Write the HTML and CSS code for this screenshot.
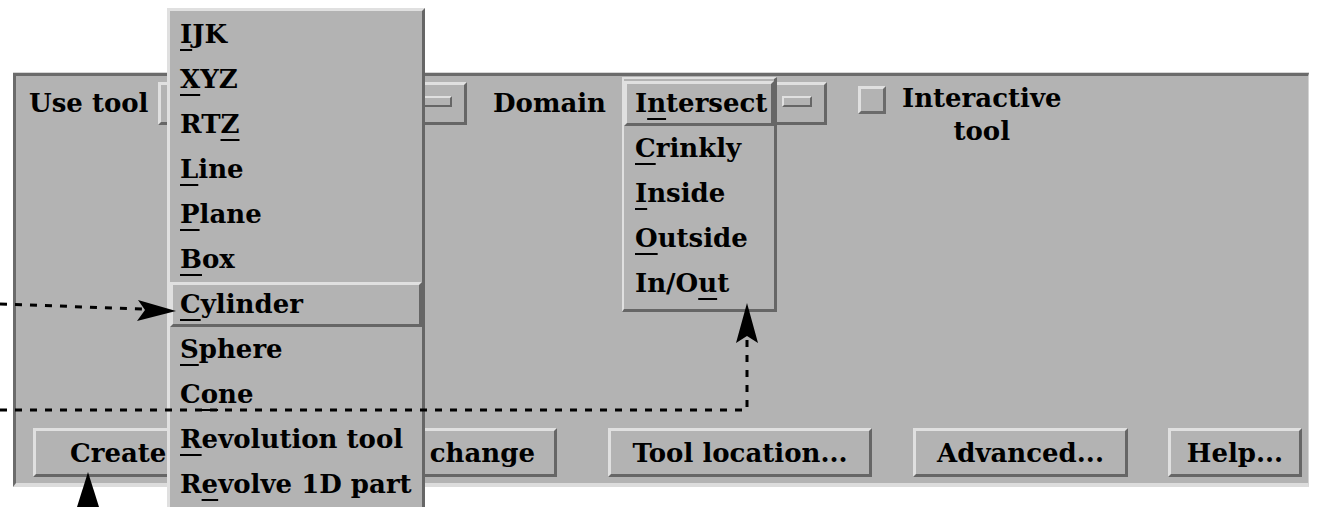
FILE: index.html
```html
<!DOCTYPE html>
<html lang="en">
<head>
  <meta charset="UTF-8" />
  <meta name="viewport" content="width=device-width, initial-scale=1.0"/>
  <title>Clip tool</title>
  <link rel="stylesheet" href="styles.css">
</head>
<body>
  <div class="stage">
    <div class="panel">
      <div class="top-row">
        <span class="label use-label">Use tool</span>
        <div class="option use-option">
          <span class="indicator"></span>
        </div>
        <span class="label domain-label">Domain</span>
        <div class="option domain-option">
          <span class="indicator"></span>
        </div>
        <div class="toggle">
          <span class="toggle-box"></span>
          <span class="toggle-text">Interactive<br>tool</span>
        </div>
      </div>

      <div class="button-row">
        <button class="btn btn-create">Create</button>
        <button class="btn btn-apply">change</button>
        <button class="btn btn-location">Tool location...</button>
        <button class="btn btn-advanced">Advanced...</button>
        <button class="btn btn-help">Help...</button>
      </div>
    </div>

    <!-- popup menu of the Use tool option -->
    <ul class="menu tool-menu">
      <li><u>I</u>JK</li>
      <li><u>X</u>YZ</li>
      <li>RT<u>Z</u></li>
      <li><u>L</u>ine</li>
      <li><u>P</u>lane</li>
      <li><u>B</u>ox</li>
      <li class="active"><u>C</u>ylinder</li>
      <li><u>S</u>phere</li>
      <li>C<u>o</u>ne</li>
      <li><u>R</u>evolution tool</li>
      <li>R<u>e</u>volve 1D part</li>
    </ul>

    <!-- popup menu of the Domain option -->
    <ul class="menu domain-menu">
      <li class="active">I<u>n</u>tersect</li>
      <li><u>C</u>rinkly</li>
      <li><u>I</u>nside</li>
      <li><u>O</u>utside</li>
      <li>In/O<u>u</u>t</li>
    </ul>

    <!-- callout arrows -->
    <svg class="callouts" width="1317" height="507" viewBox="0 0 1317 507">
      <g stroke="#000" stroke-width="3" stroke-dasharray="7 8" fill="none">
        <path d="M0 304 L142 309"/>
        <path d="M0 410 L747 410 L747 340"/>
        <path d="M88 500 L88 507"/>
      </g>
      <g fill="#000">
        <path d="M176 311 L138 300 L145 310 L137 321 Z"/>
        <path d="M747 303 L736 343 L747 336 L758 343 Z"/>
        <path d="M88 472 L77 507 L99 507 Z"/>
      </g>
    </svg>
  </div>
</body>
</html>
```

FILE: styles.css
```css
body {
  margin: 0;
  background: #fff;
  font-family: 'DejaVu Serif', 'Liberation Serif', serif;
  font-weight: bold;
  font-size: 26px;
  color: #000;
}

.stage {
  position: relative;
  width: 1317px;
  height: 507px;
  overflow: hidden;
  padding: 73px 0 0 13px;
  box-sizing: border-box;
}

.panel {
  width: 1296px;
  height: 414px;
  box-sizing: border-box;
  background: #b3b3b3;
  border-style: solid;
  border-width: 3px 1px 4px 3px;
  border-color: #6b6b6b #d4d4d4 #dcdcdc #6b6b6b;
  box-shadow: 0 -1px 0 #d6d6d6;
  display: flex;
  flex-direction: column;
  justify-content: space-between;
}

.top-row {
  display: flex;
  align-items: flex-start;
  padding: 6px 0 0 13px;
}

.label {
  line-height: 43px;
  white-space: nowrap;
}

.use-label,
.domain-label {
  width: 129px;
}

.domain-label {
  margin-left: 26px;
}

.option {
  height: 43px;
  box-sizing: border-box;
  border: 3px solid;
  border-color: #e0e0e0 #666 #666 #e0e0e0;
  display: flex;
  align-items: center;
  justify-content: flex-end;
  padding: 0 12px 0 10px;
}

.use-option {
  width: 309px;
}

.domain-option {
  width: 205px;
}

.indicator {
  width: 30px;
  height: 11px;
  box-sizing: border-box;
  border: 2px solid;
  border-color: #e0e0e0 #666 #666 #e0e0e0;
  margin-top: -4px;
}

.toggle {
  display: flex;
  align-items: flex-start;
  margin-left: 31px;
}

.toggle-box {
  width: 28px;
  height: 28px;
  box-sizing: border-box;
  margin-top: 4px;
  border: 3px solid;
  border-color: #e0e0e0 #6b6b6b #6b6b6b #e0e0e0;
}

.toggle-text {
  margin-left: 16px;
  text-align: center;
  line-height: 33px;
}

.button-row {
  display: flex;
  padding: 0 0 6px 17px;
}

.btn {
  height: 49px;
  box-sizing: border-box;
  border: 3px solid;
  border-color: #e0e0e0 #666 #666 #e0e0e0;
  background: #b3b3b3;
  font: inherit;
  color: #000;
  padding: 0;
  text-align: center;
  white-space: nowrap;
}

.btn-create { width: 177px; text-align: left; padding-left: 34px; }
.btn-apply { width: 240px; margin-left: 107px; text-align: right; padding-right: 19px; }
.btn-location { width: 264px; margin-left: 51px; }
.btn-advanced { width: 215px; margin-left: 41px; }
.btn-help { width: 134px; margin-left: 40px; }

.menu {
  position: absolute;
  margin: 0;
  list-style: none;
  box-sizing: border-box;
  background: #b3b3b3;
  border-style: solid;
}

.menu li {
  height: 45px;
  line-height: 45px;
  box-sizing: border-box;
  white-space: nowrap;
}

.menu u {
  text-decoration-thickness: 2px;
  text-underline-offset: 6px;
}

.tool-menu {
  left: 167px;
  top: 8px;
  width: 258px;
  height: 520px;
  padding: 1px 0 0 0;
  border-width: 3px 3px 0 3px;
  border-color: #e0e0e0 #666 #666 #e0e0e0;
}

.tool-menu li {
  padding-left: 10px;
}

.domain-menu {
  left: 622px;
  top: 77px;
  width: 155px;
  height: 235px;
  padding: 2px 0 0 0;
  border-width: 2px 3px 3px 2px;
  border-color: #e0e0e0 #666 #666 #e0e0e0;
}

.domain-menu li {
  padding-left: 11px;
}

.menu li.active {
  border: 3px solid;
  border-color: #e0e0e0 #666 #666 #e0e0e0;
  line-height: 39px;
}

.tool-menu li.active {
  padding-left: 7px;
}

.domain-menu li.active {
  padding-left: 8px;
}

.callouts {
  position: absolute;
  left: 0;
  top: 0;
  pointer-events: none;
}
```
